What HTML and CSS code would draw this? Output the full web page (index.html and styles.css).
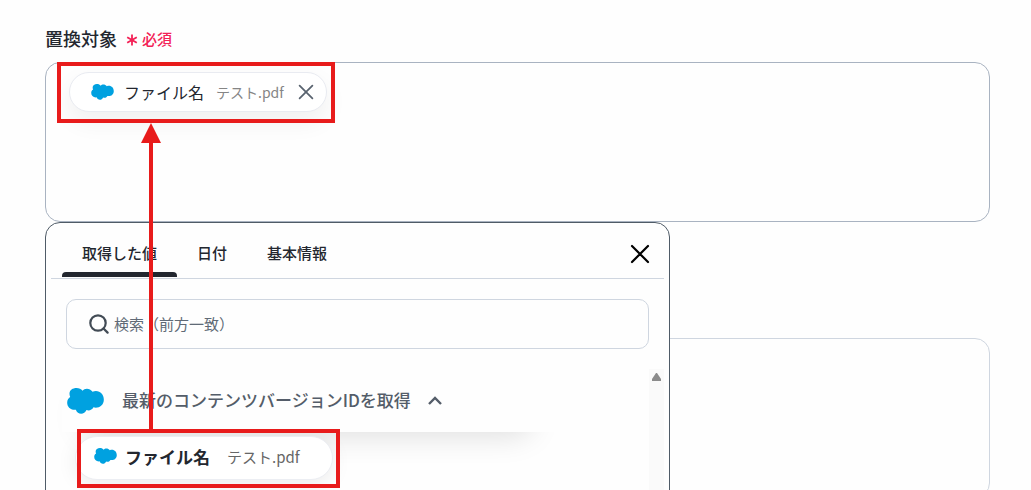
FILE: index.html
```html
<!DOCTYPE html>
<html lang="ja">
<head>
<meta charset="utf-8">
<meta name="viewport" content="width=device-width, initial-scale=1">
<title>置換対象</title>
<link rel="stylesheet" href="styles.css">
</head>
<body>
<svg class="symbols" aria-hidden="true">
  <symbol id="cloud" viewBox="0 0 110 78">
    <path fill="#00a1e0" d="M46 8C52 0 68 -1 76 11C95 4 110 17 110 35C110 52 94 62 79 58C74 67 65 69 58 66C52 81 31 81 26 65C10 67 0 56 0 44C0 36 4 30 9 27C2 10 14 0 28 0C36 0 42 3 46 8Z"/>
  </symbol>
  <symbol id="cross" viewBox="0 0 20 20">
    <path d="M2 2 18 18M18 2 2 18" fill="none" stroke="currentColor" stroke-width="2.2" stroke-linecap="round"/>
  </symbol>
</svg>
<main class="page">
  <div class="field-label">
    <h1 class="field-title" id="target-label">置換対象</h1>
    <span class="required">
      <svg class="asterisk" viewBox="0 0 12 12" aria-hidden="true"><path d="M6 0.5v11M1.2 3.2l9.6 5.6M10.8 3.2 1.2 8.8" stroke="currentColor" stroke-width="1.8"/></svg>
      必須
    </span>
  </div>

  <section class="drop-box" aria-labelledby="target-label">
    <div class="chip">
      <svg class="cloud-small" aria-hidden="true"><use href="#cloud"/></svg>
      <span class="chip-name">ファイル名</span>
      <span class="chip-value">テスト.pdf</span>
      <button class="chip-remove" type="button" aria-label="削除"><svg class="remove-icon"><use href="#cross"/></svg></button>
    </div>
    <div class="callout callout-target"></div>
    <svg class="arrow" viewBox="0 0 20 308" aria-hidden="true"><path d="M10 0 20 20H12V308H8V20H0Z" fill="#e81b1b"/></svg>
  </section>

  <div class="anchor">
    <section class="picker">
      <header class="picker-head">
        <nav class="tabs">
          <button class="tab tab-active" type="button">取得した値</button>
          <button class="tab" type="button">日付</button>
          <button class="tab" type="button">基本情報</button>
        </nav>
        <button class="close" type="button" aria-label="閉じる"><svg class="close-icon"><use href="#cross"/></svg></button>
      </header>
      <label class="search">
        <svg class="search-icon" viewBox="0 0 20 20" aria-hidden="true"><g fill="none" stroke="currentColor" stroke-width="2.2" stroke-linecap="round"><circle cx="9" cy="9" r="7.7"/><path d="M14.5 14.5 18.6 18.6"/></g></svg>
        <input class="search-input" type="text" placeholder="検索（前方一致）" aria-label="検索">
      </label>
      <div class="results">
        <div class="result-list">
          <button class="group" type="button" aria-expanded="true">
            <svg class="cloud-large" aria-hidden="true"><use href="#cloud"/></svg>
            <span class="group-name">最新のコンテンツバージョンIDを取得</span>
            <svg class="chevron" viewBox="0 0 14 9" aria-hidden="true"><path d="M1 8 7 2l6 6" fill="none" stroke="currentColor" stroke-width="2.4"/></svg>
          </button>
          <div class="group-items">
            <button class="option" type="button">
              <svg class="cloud-small" aria-hidden="true"><use href="#cloud"/></svg>
              <span class="option-name">ファイル名</span>
              <span class="option-value">テスト.pdf</span>
            </button>
            <div class="callout callout-source"></div>
          </div>
        </div>
        <div class="scrollbar"><svg class="scroll-up" viewBox="0 0 9 8" aria-hidden="true"><path d="M4 0h1l4 6v2H0V6Z" fill="#8b8b8b"/></svg></div>
      </div>
    </section>
  </div>
  <section class="next-box"></section>
</main>
</body>
</html>
```
FILE: styles.css
```css
* { box-sizing: border-box; }

body {
  margin: 0;
  background: #fefefe;
  color: #23272f;
  font-family: "Noto Sans CJK JP", sans-serif;
  font-size: 15px;
}

button, input {
  border: 0;
  padding: 0;
  background: none;
  color: inherit;
  font: inherit;
}

svg { display: block; flex: none; }
.symbols { position: absolute; width: 0; height: 0; }

.page {
  height: 100vh;
  overflow: hidden;
  padding: 24px 41px 0 45px;
}

.field-label {
  display: flex;
  align-items: center;
  gap: 9px;
  height: 38px;
  padding-bottom: 10px;
}
.field-title { margin: 0; font-size: 18px; line-height: 26px; font-weight: 500; }
.required {
  display: flex;
  align-items: center;
  gap: 4px;
  color: #f32156;
  font-weight: 500;
}
.asterisk { width: 12px; height: 12px; margin-top: 4px; }

.drop-box, .next-box {
  height: 160px;
  border: 1px solid #a9b3c1;
  border-radius: 15px;
}
.drop-box { position: relative; padding: 9px 23px; }
.next-box { margin-top: 116px; border-color: #cfd6e0; }

.chip {
  display: inline-flex;
  align-items: center;
  height: 40px;
  padding: 0 12px 0 21px;
  border: 1px solid #e9ebf1;
  border-radius: 20px;
  background: #fff;
  box-shadow: 0 10px 24px rgba(0, 0, 0, 0.06);
  white-space: nowrap;
}
.cloud-small { width: 23px; height: 16px; }
.chip-name { margin-left: 10px; font-size: 16px; }
.chip-value { margin-left: 12px; color: #858585; font-size: 14px; }
.chip-remove { margin-left: 14px; color: #59636f; }
.remove-icon { width: 16px; height: 16px; }

.callout {
  position: absolute;
  z-index: 3;
  border: 4px solid #e81b1b;
  pointer-events: none;
}
.callout-target { top: -1px; left: 11px; width: 278px; height: 61px; }
.arrow {
  position: absolute;
  z-index: 4;
  top: 60px;
  left: 95px;
  width: 20px;
  height: 308px;
  pointer-events: none;
}

.anchor { position: relative; height: 0; }
.picker {
  position: absolute;
  z-index: 2;
  top: 0;
  left: 0;
  width: 625px;
  min-height: 300px;
  padding: 0 5px;
  border: 1px solid #4f5b67;
  border-radius: 15px;
  background: #fefefe;
}
.picker-head {
  display: flex;
  justify-content: space-between;
  align-items: center;
  height: 56px;
  border-bottom: 1px solid #cfd6e0;
  padding: 0 14px 0 11px;
}
.tabs { display: flex; align-self: stretch; }
.tab {
  position: relative;
  padding: 4px 20px 0;
  font-weight: 500;
}
.tab-active::after {
  content: "";
  position: absolute;
  inset: auto 0 1px;
  height: 5px;
  border-radius: 4px 4px 0 0;
  background: #23272f;
}
.close { color: #000; margin-top: 6px; }
.close-icon { width: 20px; height: 20px; }

.search {
  display: flex;
  align-items: center;
  gap: 5px;
  height: 50px;
  margin: 20px 15px;
  padding: 0 22px;
  border: 1px solid #cfd6e0;
  border-radius: 10px;
}
.search-icon { width: 20px; height: 20px; color: #424b55; }
.search-input { flex: 1; min-width: 0; padding-bottom: 2px; outline: 0; }
.search-input::placeholder { color: #606a76; opacity: 1; }

.results { display: flex; }
.result-list {
  flex: 1;
  min-width: 0;
  padding-left: 11px;
  overflow: hidden;
}
.group {
  position: relative;
  z-index: 1;
  display: flex;
  align-items: center;
  width: 100%;
  height: 63px;
  padding-left: 5px;
  background: #fefefe;
  color: #545d69;
  font-size: 17px;
  font-weight: 500;
}
.cloud-large { width: 37px; height: 26px; }
.group-name { margin-left: 18px; padding-bottom: 2px; }
.chevron { width: 14px; height: 9px; margin-left: 17px; }
.group-items {
  position: relative;
  width: 480px;
  height: 64px;
  padding: 4px 13px;
}
.group-items::before {
  content: "";
  position: absolute;
  top: -40px;
  left: 20px;
  width: 450px;
  height: 40px;
  border-radius: 16px;
  box-shadow: 0 4px 30px rgba(0, 0, 0, 0.13);
}
.option {
  position: relative;
  display: flex;
  align-items: center;
  width: 258px;
  height: 44px;
  padding: 0 0 4px 18px;
  border: 1px solid #eceef3;
  border-radius: 22px;
  background: #fff;
  box-shadow: 0 4px 20px rgba(0, 0, 0, 0.08);
  white-space: nowrap;
}
.option-name { margin-left: 8px; font-size: 17px; font-weight: 700; }
.option-value { margin-left: 17px; color: #666; }
.callout-source { top: -3px; left: 15px; width: 263px; height: 59px; }

.scrollbar { width: 15px; padding: 4px 3px; background: #fafafa; }
.scroll-up { width: 9px; height: 8px; }
```
